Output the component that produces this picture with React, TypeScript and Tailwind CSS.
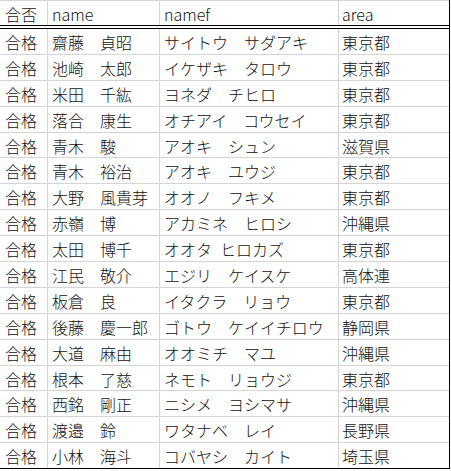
import React from "react";

const rows: [string, string, string, string][] = [
  ["合格", "齋藤　貞昭", "サイトウ　サダアキ", "東京都"],
  ["合格", "池崎　太郎", "イケザキ　タロウ", "東京都"],
  ["合格", "米田　千紘", "ヨネダ　チヒロ", "東京都"],
  ["合格", "落合　康生", "オチアイ　コウセイ", "東京都"],
  ["合格", "青木　駿", "アオキ　シュン", "滋賀県"],
  ["合格", "青木　裕治", "アオキ　ユウジ", "東京都"],
  ["合格", "大野　風貴芽", "オオノ　フキメ", "東京都"],
  ["合格", "赤嶺　博", "アカミネ　ヒロシ", "沖縄県"],
  ["合格", "太田　博千", "オオタ\u2002ヒロカズ", "東京都"],
  ["合格", "江民　敬介", "エジリ　ケイスケ", "高体連"],
  ["合格", "板倉　良", "イタクラ　リョウ", "東京都"],
  ["合格", "後藤　慶一郎", "ゴトウ　ケイイチロウ", "静岡県"],
  ["合格", "大道　麻由", "オオミチ　マユ", "沖縄県"],
  ["合格", "根本　了慈", "ネモト　リョウジ", "東京都"],
  ["合格", "西銘　剛正", "ニシメ　ヨシマサ", "沖縄県"],
  ["合格", "渡邉　鈴", "ワタナベ　レイ", "長野県"],
  ["合格", "小林　海斗", "コバヤシ　カイト", "埼玉県"],
];

function Row({ cells, last, header }: { cells: string[]; last?: boolean; header?: boolean }) {
  return (
    <div
      className={
        "flex items-center " +
        (header
          ? "h-[25px] border-t border-[#d4d4d4]"
          : last
          ? "h-[25.9px] border-b border-black"
          : "h-[25.9px] border-b border-[#d4d4d4]")
      }
    >
      <div className="w-[48px] h-full flex items-center pl-[5px] pt-[1px] border-r border-[#d4d4d4] whitespace-pre">{cells[0]}</div>
      <div className="w-[112px] h-full flex items-center pl-[4px] pt-[1px] border-r border-[#d4d4d4] whitespace-pre">{cells[1]}</div>
      <div className="w-[179px] h-full flex items-center pl-[4px] pt-[1px] border-r border-[#d4d4d4] whitespace-pre">{cells[2]}</div>
      <div className="flex-1 h-full flex items-center pl-[3px] pt-[1px] whitespace-pre">{cells[3]}</div>
    </div>
  );
}

export default function App() {
  return (
    <div className="bg-white w-[451px] h-[471px]">
      <div
        className="w-[450px] border-r border-black text-[16px] leading-none font-light text-[#111]"
        style={{ fontFamily: '"Noto Sans CJK JP", "Noto Sans", sans-serif' }}
      >
        <Row header cells={["合否", "name", "namef", "area"]} />
        <div className="h-px bg-black" />
        <div className="h-[2px] bg-white" />
        <div className="h-px bg-black" />
        {rows.map((r, i) => (
          <Row key={i} cells={r} last={i === rows.length - 1} />
        ))}
      </div>
    </div>
  );
}
